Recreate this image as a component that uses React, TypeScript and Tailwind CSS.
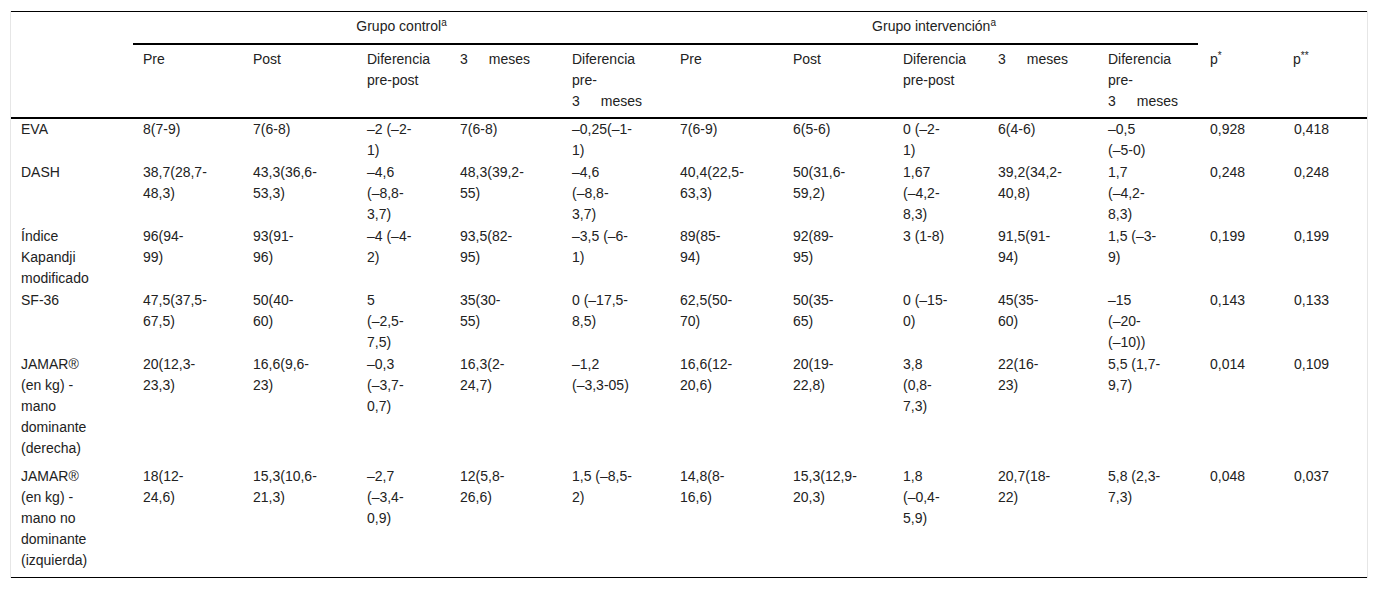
const cols = [
  "w-[122px]",
  "w-[110px]",
  "w-[114px]",
  "w-[93px]",
  "w-[112px]",
  "w-[108px]",
  "w-[113px]",
  "w-[110px]",
  "w-[95px]",
  "w-[110px]",
  "w-[100px]",
  "w-[84px]",
  "w-[85px]",
];

const M = "3\u2003\u2002meses";

const subHeads = [
  "Pre",
  "Post",
  "Diferencia\npre-post",
  M,
  "Diferencia\npre-\n" + M,
  "Pre",
  "Post",
  "Diferencia\npre-post",
  M,
  "Diferencia\npre-\n" + M,
];

const rows: string[][] = [
  ["EVA", "8(7-9)", "7(6-8)", "–2 (–2-\n1)", "7(6-8)", "–0,25(–1-\n1)", "7(6-9)", "6(5-6)", "0 (–2-\n1)", "6(4-6)", "–0,5\n(–5-0)", "0,928", "0,418"],
  ["DASH", "38,7(28,7-\n48,3)", "43,3(36,6-\n53,3)", "–4,6\n(–8,8-\n3,7)", "48,3(39,2-\n55)", "–4,6\n(–8,8-\n3,7)", "40,4(22,5-\n63,3)", "50(31,6-\n59,2)", "1,67\n(–4,2-\n8,3)", "39,2(34,2-\n40,8)", "1,7\n(–4,2-\n8,3)", "0,248", "0,248"],
  ["Índice\nKapandji\nmodificado", "96(94-\n99)", "93(91-\n96)", "–4 (–4-\n2)", "93,5(82-\n95)", "–3,5 (–6-\n1)", "89(85-\n94)", "92(89-\n95)", "3 (1-8)", "91,5(91-\n94)", "1,5 (–3-\n9)", "0,199", "0,199"],
  ["SF-36", "47,5(37,5-\n67,5)", "50(40-\n60)", "5\n(–2,5-\n7,5)", "35(30-\n55)", "0 (–17,5-\n8,5)", "62,5(50-\n70)", "50(35-\n65)", "0 (–15-\n0)", "45(35-\n60)", "–15\n(–20-\n(–10))", "0,143", "0,133"],
  ["JAMAR®\n(en kg) -\nmano\ndominante\n(derecha)", "20(12,3-\n23,3)", "16,6(9,6-\n23)", "–0,3\n(–3,7-\n0,7)", "16,3(2-\n24,7)", "–1,2\n(–3,3-05)", "16,6(12-\n20,6)", "20(19-\n22,8)", "3,8\n(0,8-\n7,3)", "22(16-\n23)", "5,5 (1,7-\n9,7)", "0,014", "0,109"],
  ["JAMAR®\n(en kg) -\nmano no\ndominante\n(izquierda)", "18(12-\n24,6)", "15,3(10,6-\n21,3)", "–2,7\n(–3,4-\n0,9)", "12(5,8-\n26,6)", "1,5 (–8,5-\n2)", "14,8(8-\n16,6)", "15,3(12,9-\n20,3)", "1,8\n(–0,4-\n5,9)", "20,7(18-\n22)", "5,8 (2,3-\n7,3)", "0,048", "0,037"],
];

export default function App() {
  return (
    <div className="min-h-[590px] bg-white text-[#222] text-[14px] leading-[21px] font-['Liberation_Sans',Arial,sans-serif]">
      <div className="ml-[10px] mt-[11px] w-[1358px] border-x border-[#e6e6e6]">
        <table className="w-[1356px] table-fixed border-separate border-spacing-0 border-t border-black">
          <colgroup>
            {cols.map((c, i) => (
              <col key={i} className={c} />
            ))}
          </colgroup>
          <thead>
            <tr>
              <th rowSpan={2} className="border-b-2 border-black" />
              <th colSpan={5} className="px-[10px] pt-1 pb-1.5 text-center font-normal border-b-2 border-black">
                Grupo control<sup className="text-[10px]">a</sup>
              </th>
              <th colSpan={5} className="px-[10px] pt-1 pb-1.5 text-center font-normal border-b-2 border-black">
                Grupo intervención<sup className="text-[10px]">a</sup>
              </th>
              <th colSpan={2} />
            </tr>
            <tr>
              {subHeads.map((h, i) => (
                <th
                  key={i}
                  className="pl-[10px] pt-1 pb-[5px] text-left align-top font-normal whitespace-pre border-b-2 border-black"
                >
                  {h}
                </th>
              ))}
              <th className="pl-[12px] pt-1 pb-[5px] text-left align-top font-normal border-b-2 border-black">
                p<sup className="text-[10px]">*</sup>
              </th>
              <th className="pl-[11px] pt-1 pb-[5px] text-left align-top font-normal border-b-2 border-black">
                p<sup className="text-[10px]">**</sup>
              </th>
            </tr>
          </thead>
          <tbody>
            {rows.map((row, r) => {
              const last = r === rows.length - 1;
              return (
                <tr key={r}>
                  {row.map((cell, c) => (
                    <td
                      key={c}
                      className={
                        "align-top whitespace-pre " +
                        (c >= 11 ? "pl-[12px] " : "pl-[10px] ") +
                        (last ? "pt-[6px] pb-[6px] border-b border-black" : "pb-px")
                      }
                    >
                      {cell}
                    </td>
                  ))}
                </tr>
              );
            })}
          </tbody>
        </table>
      </div>
    </div>
  );
}
